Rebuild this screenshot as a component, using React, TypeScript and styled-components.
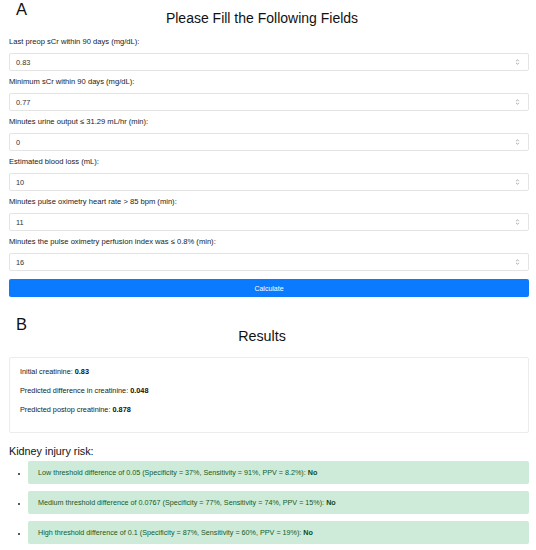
import React from 'react'
import styled, { createGlobalStyle } from 'styled-components'

const GlobalStyle = createGlobalStyle`
	html, body {
		margin: 0;
		padding: 0;
		background: #ffffff;
	}
	body {
		font-family: 'Liberation Sans', Arial, sans-serif;
		color: #212529;
	}
`

const fields = [
	{ label: 'Last preop sCr within 90 days (mg/dL):', value: '0.83' },
	{ label: 'Minimum sCr within 90 days (mg/dL):', value: '0.77' },
	{ label: 'Minutes urine output ≤ 31.29 mL/hr (min):', value: '0' },
	{ label: 'Estimated blood loss (mL):', value: '10' },
	{ label: 'Minutes pulse oximetry heart rate > 85 bpm (min):', value: '11' },
	{ label: 'Minutes the pulse oximetry perfusion index was ≤ 0.8% (min):', value: '16' },
]

const results = [
	{ label: 'Initial creatinine:', value: '0.83' },
	{ label: 'Predicted difference in creatinine:', value: '0.048' },
	{ label: 'Predicted postop creatinine:', value: '0.878' },
]

const risks = [
	'Low threshold difference of 0.05 (Specificity = 37%, Sensitivity = 91%, PPV = 8.2%):',
	'Medium threshold difference of 0.0767 (Specificity = 77%, Sensitivity = 74%, PPV = 15%):',
	'High threshold difference of 0.1 (Specificity = 87%, Sensitivity = 60%, PPV = 19%):',
]

const Spinner = () => (
	<SpinIcon viewBox="0 0 6 10" width="5" height="8">
		<path d="M1.2 4 L3 2.2 L4.8 4" />
		<path d="M1.2 6 L3 7.8 L4.8 6" />
	</SpinIcon>
)

export default function App() {
	return (
		<Page>
			<GlobalStyle />
			<Section>
				<PanelLetter>A</PanelLetter>
				<FormTitle>Please Fill the Following Fields</FormTitle>
				<Form>
					{fields.map((f) => (
						<Field key={f.label}>
							<Label>{f.label}</Label>
							<InputBox>
								<span>{f.value}</span>
								<Spinner />
							</InputBox>
						</Field>
					))}
					<Button>Calculate</Button>
				</Form>
			</Section>
			<ResultsSection>
				<PanelLetter>B</PanelLetter>
				<ResultsTitle>Results</ResultsTitle>
				<Card>
					{results.map((r) => (
						<ResultLine key={r.label}>
							{r.label} <b>{r.value}</b>
						</ResultLine>
					))}
				</Card>
				<RiskHeading>Kidney injury risk:</RiskHeading>
				<RiskList>
					{risks.map((r) => (
						<RiskItem key={r}>
							<Alert>
								{r} <b>No</b>
							</Alert>
						</RiskItem>
					))}
				</RiskList>
			</ResultsSection>
		</Page>
	)
}

// Styles
const Page = styled.div`
	padding: 0 7px 0 9px;
	width: 536px;
	box-sizing: border-box;
`
const Section = styled.div`
	position: relative;
	padding-top: 1px;
`
const ResultsSection = styled(Section)`
	margin-top: 18px;
`
const PanelLetter = styled.div`
	position: absolute;
	left: 7px;
	top: -1px;
	font-size: 16.5px;
	line-height: 20px;
	color: #111;
`
const FormTitle = styled.h2`
	margin: 9px 0 11px;
	padding-right: 14px;
	font-size: 14px;
	font-weight: 400;
	line-height: 16px;
	text-align: center;
	color: #111;
`
const ResultsTitle = styled(FormTitle)`
	margin: 11px 0 12px;
	font-size: 14.3px;
	line-height: 18px;
`
const Form = styled.div`
	display: flex;
	flex-direction: column;
`
const Field = styled.div`
	display: flex;
	flex-direction: column;
	gap: 6px;
	margin-bottom: 6px;
`
const Label = styled.div`
	font-size: 7.6px;
	line-height: 10px;
	color: #222;
`
const InputBox = styled.div`
	display: flex;
	align-items: center;
	justify-content: space-between;
	height: 18px;
	padding: 0 8px 0 6px;
	border: 1px solid #e4e4e4;
	border-radius: 2px;
	font-size: 7.4px;
	color: #333;
	box-sizing: border-box;
`
const SpinIcon = styled.svg`
	fill: none;
	stroke: #888;
	stroke-width: 0.9;
`
const Button = styled.div`
	margin-top: 2px;
	height: 18px;
	border-radius: 2px;
	background: #0a7bff;
	color: #ffffff;
	font-size: 7px;
	display: flex;
	align-items: center;
	justify-content: center;
`
const Card = styled.div`
	border: 1px solid #ececec;
	border-radius: 2px;
	padding: 9px 10px 8px;
`
const ResultLine = styled.p`
	margin: 0 0 10px;
	font-size: 7.3px;
	line-height: 9px;
	color: #222;
	b {
		color: #111;
	}
`
const RiskHeading = styled.h3`
	margin: 11px 0 3px;
	font-size: 10.8px;
	font-weight: 400;
	line-height: 14px;
	color: #111;
`
const RiskList = styled.ul`
	margin: 0;
	padding-left: 19px;
	list-style: disc;
	font-size: 7px;
`
const RiskItem = styled.li`
	margin-bottom: 7px;
	&::marker {
		font-size: 6px;
	}
`
const Alert = styled.div`
	height: 23px;
	display: flex;
	align-items: center;
	gap: 2px;
	padding: 0 10px;
	border-radius: 2px;
	background: #cdebd8;
	color: #175a2a;
	font-size: 7.2px;
	b {
		color: #0f4d20;
	}
`
